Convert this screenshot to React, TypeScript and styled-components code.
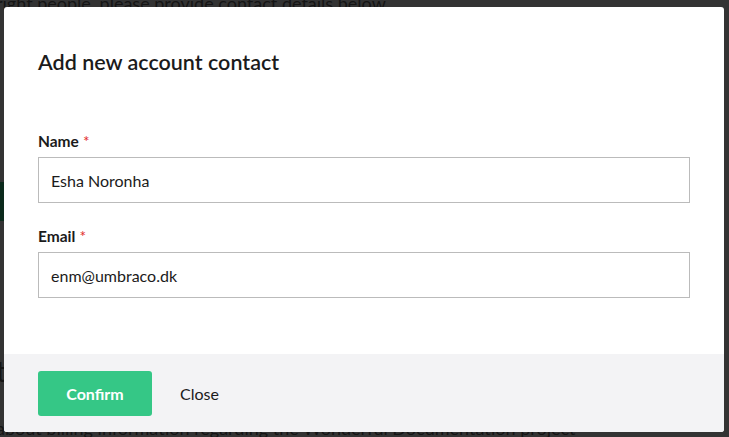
import React from "react";
import styled, { createGlobalStyle } from "styled-components";

const Global = createGlobalStyle`
  html, body { margin: 0; padding: 0; }
  body { background: #333333; font-family: Lato, "Open Sans", sans-serif; overflow: hidden; }
`;

const Backdrop = styled.div`
  position: relative;
  width: 729px;
  height: 437px;
  background: #333333;
  overflow: hidden;
`;

const BgPage = styled.div`
  display: flex;
  flex-direction: column;
  height: 100%;
  color: #151515;
  font-family: Lato, sans-serif;
`;

const BgLine = styled.div<{ $top: number; $size: number }>`
  margin-top: ${(p) => p.$top}px;
  margin-left: -4px;
  font-size: ${(p) => p.$size}px;
  line-height: 1;
  white-space: nowrap;
`;

const BgGreen = styled.div`
  margin-top: 170px;
  width: 10px;
  height: 40px;
  background: #0b2a1c;
`;

const Modal = styled.div`
  position: absolute;
  left: 4px;
  top: 7px;
  width: 720px;
  height: 425px;
  background: #ffffff;
  border-radius: 3px;
  display: flex;
  flex-direction: column;
  overflow: hidden;
`;

const Header = styled.div`
  padding: 40px 34px 0;
`;

const Title = styled.h2`
  margin: 0;
  font-family: Lato, sans-serif;
  font-size: 21.5px;
  line-height: 30px;
  font-weight: 600;
  color: #1b1b1b;
`;

const Body = styled.div`
  flex: 1;
  padding: 54px 34px 0;
  display: flex;
  flex-direction: column;
  gap: 23px;
`;

const Field = styled.div`
  display: flex;
  flex-direction: column;
  gap: 6px;
`;

const Label = styled.label`
  font-size: 15.5px;
  line-height: 20px;
  font-weight: 700;
  color: #1b1b1b;
`;

const Req = styled.span`
  color: #e22c2c;
  font-weight: 400;
  margin-left: 4px;
`;

const Input = styled.input`
  box-sizing: border-box;
  width: 652px;
  height: 46px;
  border: 1px solid #bbbbbb;
  border-radius: 0;
  padding: 0 12px;
  font-family: Lato, sans-serif;
  font-size: 16px;
  color: #1b1b1b;
  background: #fff;
  outline: none;
`;

const Footer = styled.div`
  height: 78px;
  box-sizing: border-box;
  background: #f3f3f5;
  padding: 17px 34px;
  display: flex;
  align-items: center;
  gap: 28px;
`;

const PrimaryButton = styled.button`
  width: 114px;
  height: 45px;
  border: none;
  border-radius: 3px;
  background: #35c786;
  color: #ffffff;
  font-family: Lato, sans-serif;
  font-size: 16px;
  font-weight: 700;
  cursor: pointer;
`;

const LinkButton = styled.button`
  border: none;
  background: transparent;
  padding: 0;
  font-family: Lato, sans-serif;
  font-size: 16px;
  font-weight: 400;
  color: #1b1b1b;
  cursor: pointer;
`;

export default function App() {
  return (
    <>
      <Global />
      <Backdrop>
        <BgPage>
          <BgLine $top={-6} $size={18}>right people, please provide contact details below</BgLine>
          <BgGreen />
          <BgLine $top={136} $size={28}>t</BgLine>
          <BgLine $top={34} $size={18}>about billing information regarding the Wonderful Documentation project</BgLine>
        </BgPage>
        <Modal>
          <Header>
            <Title>Add new account contact</Title>
          </Header>
          <Body>
            <Field>
              <Label>
                Name<Req>*</Req>
              </Label>
              <Input defaultValue="Esha Noronha" />
            </Field>
            <Field>
              <Label>
                Email<Req>*</Req>
              </Label>
              <Input defaultValue="enm@umbraco.dk" />
            </Field>
          </Body>
          <Footer>
            <PrimaryButton>Confirm</PrimaryButton>
            <LinkButton>Close</LinkButton>
          </Footer>
        </Modal>
      </Backdrop>
    </>
  );
}
